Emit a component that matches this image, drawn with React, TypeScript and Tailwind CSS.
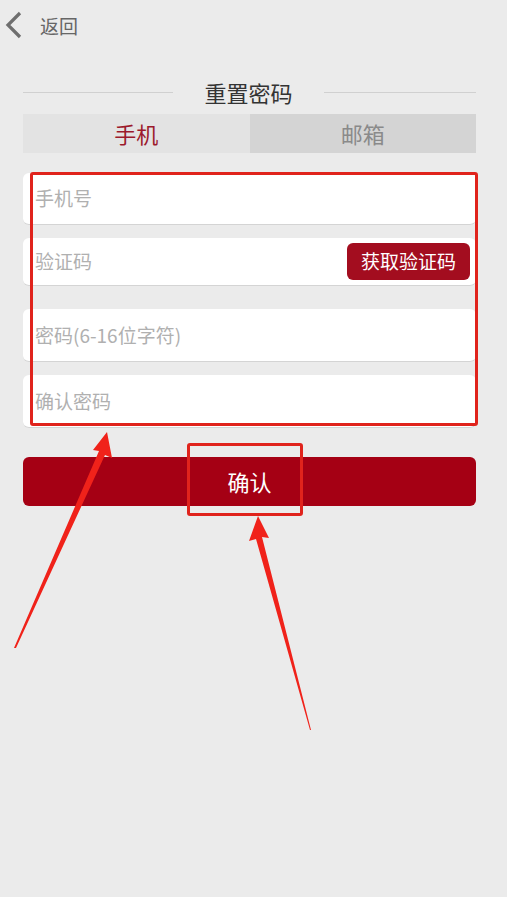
import React from 'react';

const FONT = { fontFamily: '"Noto Sans CJK SC", "Noto Sans", sans-serif' };

const Field: React.FC<{ placeholder: string; h: string; children?: React.ReactNode }> = ({ placeholder, h, children }) => (
  <div className={`${h} bg-white rounded-md border-b border-[#d4d4d4] flex items-center pl-3 pr-[6px]`}>
    <span className="flex-1 text-[19px] text-[#b0b0b0]">{placeholder}</span>
    {children}
  </div>
);

export default function App() {
  return (
    <div className="relative w-[507px] h-[897px] bg-[#ebebeb] overflow-hidden" style={FONT}>
      {/* Header */}
      <div className="h-[52px] flex items-center">
        <svg width="22" height="30" viewBox="0 0 22 30" className="ml-[3px]">
          <path d="M17 2 L5 14 L17 26" fill="none" stroke="#6e6e6e" strokeWidth="3.2" />
        </svg>
        <span className="ml-[15px] text-[19px] text-[#666]">返回</span>
      </div>

      <div className="ml-[23px] w-[453px]">
        {/* Title */}
        <div className="mt-[24px] flex items-center h-[32px]">
          <div className="w-[150px] h-px bg-[#d0d0d0]" />
          <span className="flex-1 text-center text-[22px] text-[#333]">重置密码</span>
          <div className="w-[152px] h-px bg-[#d0d0d0]" />
        </div>

        {/* Tabs */}
        <div className="mt-[6px] flex h-[39px]">
          <div className="flex-1 bg-[#e3e3e3] flex items-center justify-center text-[22px] text-[#9c1a2c]">手机</div>
          <div className="flex-1 bg-[#d4d4d4] flex items-center justify-center text-[22px] text-[#8a8a8a]">邮箱</div>
        </div>

        {/* Fields */}
        <div className="mt-[20px]">
          <Field placeholder="手机号" h="h-[52px]" />
          <div className="mt-[13px]">
            <Field placeholder="验证码" h="h-[48px]">
              <div className="w-[123px] h-[37px] rounded-md bg-[#a30d1f] flex items-center justify-center text-[19px] text-white">获取验证码</div>
            </Field>
          </div>
          <div className="mt-[23px]">
            <Field placeholder="密码(6-16位字符)" h="h-[53px]" />
          </div>
          <div className="mt-[13px]">
            <Field placeholder="确认密码" h="h-[53px]" />
          </div>
        </div>

        {/* Confirm */}
        <div className="mt-[29px] h-[49px] rounded-md bg-[#a50014] flex items-center justify-center text-[22px] text-white">确认</div>
      </div>

      {/* Annotations */}
      <div className="absolute left-[30px] top-[172px] w-[448px] h-[254px] border-[3px] border-[#e0231c] rounded-[3px]" />
      <div className="absolute left-[187px] top-[443px] w-[116px] h-[73px] border-[3px] border-[#e0231c] rounded-[3px]" />
      <svg className="absolute left-0 top-0" width="507" height="897" viewBox="0 0 507 897">
        <polygon points="107,432 112,458 105,455 16,648 14,648 99,451 93,450" fill="#f0221a" />
        <polygon points="258,516 269,538 262,537 311,730 310,730 256,539 249,541" fill="#f0221a" />
      </svg>
    </div>
  );
}
